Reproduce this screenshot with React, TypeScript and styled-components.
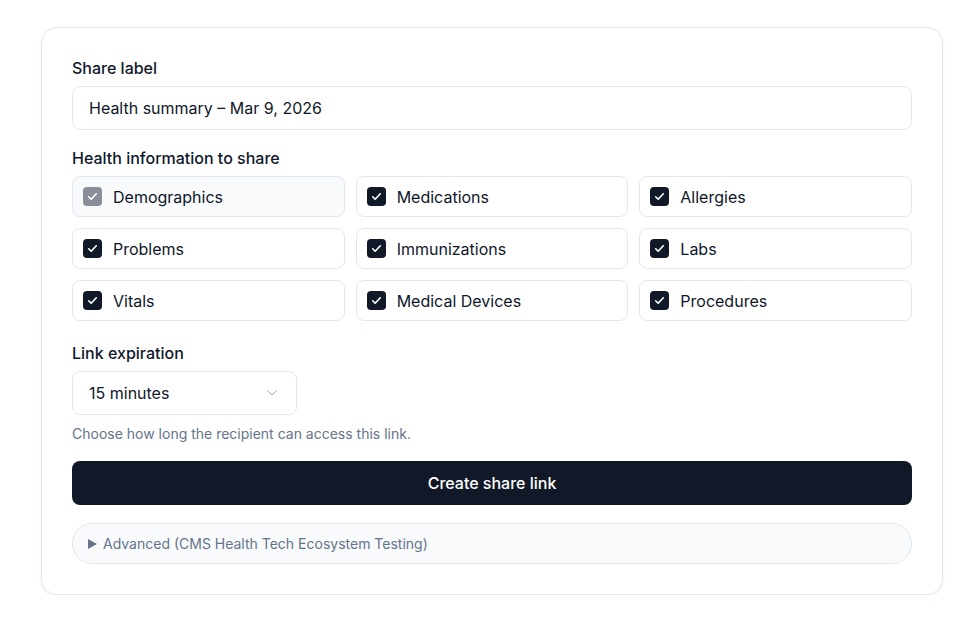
import styled, { createGlobalStyle } from 'styled-components'
import React, { JSX } from 'react'

const Global = createGlobalStyle`
  body { margin: 0; background: #fff; font-family: Inter, "Noto Sans", sans-serif; color: #0f172a; }
`

const Page = styled.div`
  padding: 27px 27px 0 41px;
`

const Card = styled.div`
  width: 902px;
  box-sizing: border-box;
  border: 1px solid #e2e8f0;
  border-radius: 16px;
  padding: 26px 30px 30px 30px;
  box-shadow: 0 1px 3px rgba(15, 23, 42, 0.08);
  display: flex;
  flex-direction: column;
`

const Label = styled.div`
  font-size: 16px;
  font-weight: 500;
  line-height: 28px;
  margin-bottom: 4px;
`

const Input = styled.div`
  height: 44px;
  box-sizing: border-box;
  border: 1px solid #e2e8f0;
  border-radius: 8px;
  padding: 0 16px;
  display: flex;
  align-items: center;
  font-size: 16px;
  margin-bottom: 14px;
`

const Grid = styled.div`
  display: grid;
  grid-template-columns: repeat(3, 1fr);
  gap: 11px;
  margin-bottom: 18px;
`

const Option = styled.div<{ $disabled?: boolean }>`
  height: 41px;
  box-sizing: border-box;
  border: 1px solid #e2e8f0;
  border-radius: 8px;
  background: ${(p) => (p.$disabled ? '#f8fafc' : '#fff')};
  display: flex;
  align-items: center;
  gap: 11px;
  padding: 0 10px;
  font-size: 16px;
`

const Box = styled.span<{ $disabled?: boolean }>`
  width: 19px;
  height: 19px;
  border-radius: 4px;
  background: ${(p) => (p.$disabled ? '#8b8e98' : '#111827')};
  display: flex;
  align-items: center;
  justify-content: center;
`

const Select = styled(Input)`
  width: 225px;
  justify-content: space-between;
  margin-bottom: 10px;
`

const Help = styled.div`
  font-size: 14px;
  color: #64748b;
  margin-bottom: 19px;
`

const Button = styled.div`
  height: 44px;
  border-radius: 8px;
  background: #111827;
  color: #fff;
  font-size: 16px;
  font-weight: 500;
  display: flex;
  align-items: center;
  justify-content: center;
  margin-bottom: 18px;
`

const Details = styled.div`
  height: 41px;
  box-sizing: border-box;
  border: 1px solid #e2e8f0;
  border-radius: 20px;
  background: #f8fafc;
  padding: 0 15px;
  display: flex;
  align-items: center;
  gap: 6px;
  font-size: 14px;
  color: #64748b;
`

const Check = (): JSX.Element => (
  <svg width="13" height="13" viewBox="0 0 24 24" fill="none" stroke="#fff" strokeWidth="3" strokeLinecap="round" strokeLinejoin="round">
    <path d="M5 12.5l4.5 4.5L19 7" />
  </svg>
)

const items = ['Demographics', 'Medications', 'Allergies', 'Problems', 'Immunizations', 'Labs', 'Vitals', 'Medical Devices', 'Procedures']

export default function App (): JSX.Element {
  return (
    <Page>
      <Global />
      <Card>
        <Label>Share label</Label>
        <Input>Health summary – Mar 9, 2026</Input>
        <Label>Health information to share</Label>
        <Grid>
          {items.map((it, i) => (
            <Option key={it} $disabled={i === 0}>
              <Box $disabled={i === 0}><Check /></Box>
              {it}
            </Option>
          ))}
        </Grid>
        <Label>Link expiration</Label>
        <Select>
          15 minutes
          <svg width="16" height="16" viewBox="0 0 24 24" fill="none" stroke="#94a3b8" strokeWidth="1.5" strokeLinecap="round" strokeLinejoin="round">
            <path d="M6 9l6 6 6-6" />
          </svg>
        </Select>
        <Help>Choose how long the recipient can access this link.</Help>
        <Button>Create share link</Button>
        <Details>
          <svg width="9" height="10" viewBox="0 0 9 10"><path d="M0 0L9 5L0 10Z" fill="#64748b" /></svg>
          Advanced (CMS Health Tech Ecosystem Testing)
        </Details>
      </Card>
    </Page>
  )
}
